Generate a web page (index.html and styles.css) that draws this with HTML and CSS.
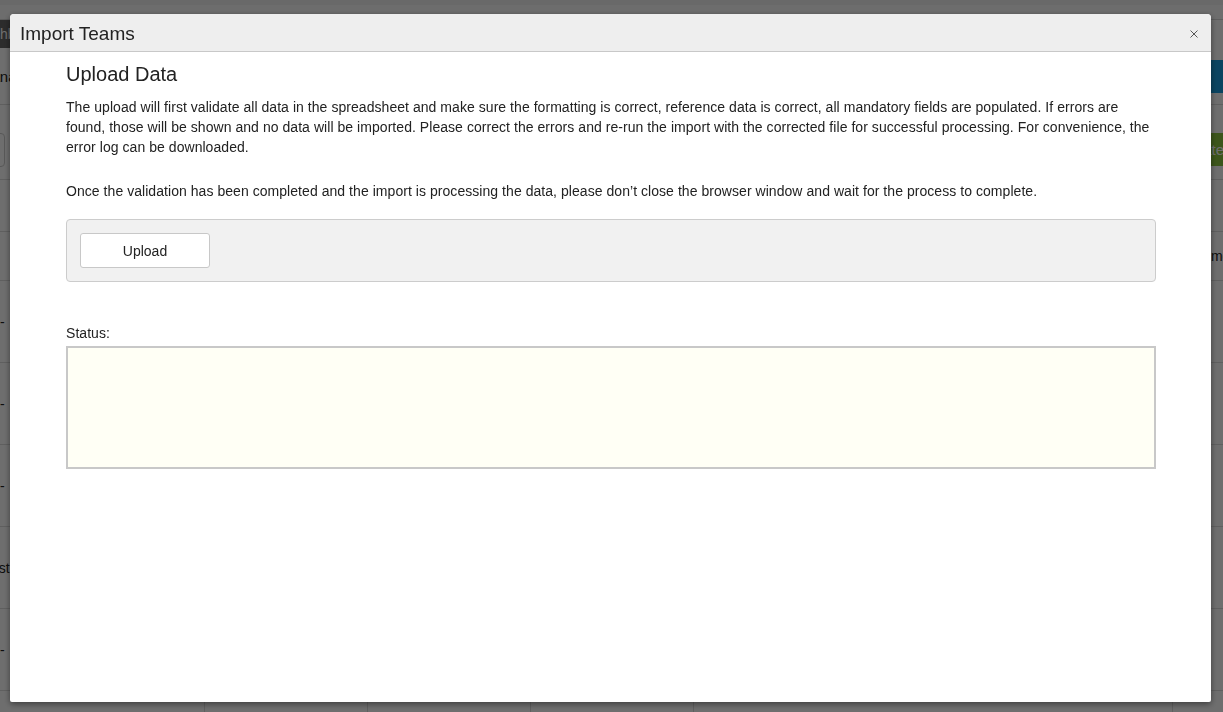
FILE: index.html
```html
<!DOCTYPE html>
<html>
    <head>
        <meta charset="UTF-8" />
        <title>Import Teams</title>
        <link rel="stylesheet" href="styles.css">
    </head>
    <body>
        <!-- Page behind the modal -->
        <div class="page">
            <div class="topbar"></div>
            <div class="navbar"><span class="brand">Dashboard</span></div>
            <div class="subheader">
                <span class="page-title">Management</span>
                <button class="btn-blue">New</button>
            </div>
            <div class="toolbar">
                <input class="search" type="text" />
                <button class="btn-green">Create</button>
            </div>
            <div class="filterbar"></div>
            <div class="grid-row grid-head">
                <div class="cell"></div>
                <div class="cell"></div>
                <div class="cell"></div>
                <div class="cell"></div>
                <div class="cell"></div>
                <div class="cell">Name</div>
            </div>
            <div class="grid-row">
                <div class="cell">-</div><div class="cell"></div><div class="cell"></div>
                <div class="cell"></div><div class="cell"></div><div class="cell"></div>
            </div>
            <div class="grid-row">
                <div class="cell">-</div><div class="cell"></div><div class="cell"></div>
                <div class="cell"></div><div class="cell"></div><div class="cell"></div>
            </div>
            <div class="grid-row">
                <div class="cell">-</div><div class="cell"></div><div class="cell"></div>
                <div class="cell"></div><div class="cell"></div><div class="cell"></div>
            </div>
            <div class="grid-row">
                <div class="cell cell-cut">Test</div><div class="cell"></div><div class="cell"></div>
                <div class="cell"></div><div class="cell"></div><div class="cell"></div>
            </div>
            <div class="grid-row">
                <div class="cell">-</div><div class="cell"></div><div class="cell"></div>
                <div class="cell"></div><div class="cell"></div><div class="cell"></div>
            </div>
            <div class="grid-row">
                <div class="cell"></div><div class="cell"></div><div class="cell"></div>
                <div class="cell"></div><div class="cell"></div><div class="cell"></div>
            </div>
        </div>

        <!-- The Modal -->
        <div class="backdrop"></div>
        <div class="modal">
            <div class="modal-header">
                <span class="modal-title">Import Teams</span>
                <span class="close">
                    <svg width="8" height="8" viewBox="0 0 8 8">
                        <path d="M0.5 0.5 L7.5 7.5 M7.5 0.5 L0.5 7.5" stroke="#444" stroke-width="0.9" fill="none" />
                    </svg>
                </span>
            </div>
            <div class="modal-body">
                <h2>Upload Data</h2>
                <p>The upload will first validate all data in the spreadsheet and make sure the formatting is correct, reference data is correct, all mandatory fields are populated. If errors are found, those will be shown and no data will be imported. Please correct the errors and re-run the import with the corrected file for successful processing. For convenience, the error log can be downloaded.</p>
                <p class="note">Once the validation has been completed and the import is processing the data, please don&rsquo;t close the browser window and wait for the process to complete.</p>

                <div class="upload-panel">
                    <button class="btn-upload">Upload</button>
                </div>

                <label class="status-label">Status:</label>
                <div class="status-box"></div>
            </div>
        </div>
    </body>
</html>
```

FILE: styles.css
```css
body {
    margin: 0;
    font-family: "Liberation Sans", Arial, sans-serif;
    font-size: 14px;
    color: #222;
    background-color: #fff;
    overflow: hidden;
}

/* background page */

.page {
    width: 1223px;
    height: 712px;
    overflow: hidden;
}

.topbar {
    height: 20px;
    box-sizing: border-box;
    background-color: #fcfcfc;
    border-top: 5px solid #f4f4f4;
    border-bottom: 1px solid #d8d8d8;
}

.navbar {
    height: 28px;
    line-height: 28px;
    font-size: 14px;
}

.brand {
    display: inline-block;
    margin-left: -35px;
    padding: 0 12px 0 10px;
    background-color: #666;
    color: #fff;
}

.subheader {
    height: 57px;
    box-sizing: border-box;
    display: flex;
    align-items: center;
    justify-content: space-between;
    border-bottom: 1px solid #ddd;
    font-size: 15px;
}

.page-title {
    margin-left: -21px;
}

.btn-blue {
    width: 80px;
    height: 33px;
    margin-right: -63px;
    border: none;
    border-radius: 3px;
    background-color: #1a9fe0;
    color: #fff;
    text-align: right;
}

.toolbar {
    height: 75px;
    box-sizing: border-box;
    display: flex;
    align-items: center;
    justify-content: space-between;
    border-bottom: 1px solid #ddd;
}

.search {
    width: 100px;
    height: 34px;
    margin-left: -95px;
    margin-top: 15px;
    border: 1px solid #ccc;
    border-radius: 4px;
    box-sizing: border-box;
}

.btn-green {
    width: 80px;
    height: 33px;
    margin-right: -22px;
    margin-top: 15px;
    border: none;
    border-radius: 3px;
    background-color: #8cc63f;
    color: #fff;
    font-family: "Liberation Sans", Arial, sans-serif;
    font-size: 15px;
    text-align: left;
    padding-left: 14px;
}

.filterbar {
    height: 52px;
    box-sizing: border-box;
    border-bottom: 1px solid #ddd;
}

.grid-row {
    display: grid;
    grid-template-columns: 204px 163px 163px 163px 479px 1fr;
    height: 82px;
    box-sizing: border-box;
    border-bottom: 1px solid #ddd;
    font-size: 14px;
}

.grid-head {
    height: 49px;
}

.cell {
    border-left: 1px solid #ddd;
    display: flex;
    align-items: center;
    overflow: hidden;
    white-space: nowrap;
}

.grid-row .cell:first-child {
    border-left: none;
}

.grid-row .cell-cut {
    text-indent: -16px;
}

.grid-row .cell:last-child {
    padding-left: 20px;
}

/* modal */

.backdrop {
    position: fixed;
    left: 0;
    top: 0;
    width: 100%;
    height: 100%;
    background-color: rgba(0, 0, 0, 0.57);
}

.modal {
    position: fixed;
    left: 10px;
    top: 14px;
    width: 1201px;
    height: 688px;
    background-color: #fff;
    border-radius: 4px 4px 2px 2px;
    box-shadow: 0 2px 6px rgba(0, 0, 0, 0.45);
    overflow: hidden;
}

.modal-header {
    height: 37px;
    display: flex;
    align-items: center;
    justify-content: space-between;
    padding: 0 13px 0 10px;
    background-color: #eee;
    border-bottom: 1px solid #c8c8c8;
}

.modal-title {
    font-size: 19px;
    color: #222;
    padding-top: 3px;
}

.close {
    display: flex;
    cursor: pointer;
    padding-top: 2px;
}

.modal-body {
    padding: 10px 55px 0 56px;
    letter-spacing: 0.05px;
}

h2 {
    margin: 0 0 11px;
    font-size: 20px;
    line-height: 24px;
    font-weight: normal;
    letter-spacing: 0;
    color: #222;
}

p {
    margin: 0;
    line-height: 20px;
}

.note {
    margin-top: 24px;
}

.upload-panel {
    margin-top: 18px;
    padding: 13px;
    background-color: #f1f1f1;
    border: 1px solid #ccc;
    border-radius: 4px;
}

.btn-upload {
    width: 130px;
    height: 35px;
    background-color: #fff;
    border: 1px solid #c8c8c8;
    border-radius: 3px;
    font-family: "Liberation Sans", Arial, sans-serif;
    font-size: 14px;
    color: #222;
    cursor: pointer;
}

.status-label {
    display: block;
    margin-top: 43px;
    line-height: 16px;
}

.status-box {
    margin-top: 5px;
    height: 119px;
    background-color: #fffff5;
    border: 2px solid #c8c8c8;
}
```
